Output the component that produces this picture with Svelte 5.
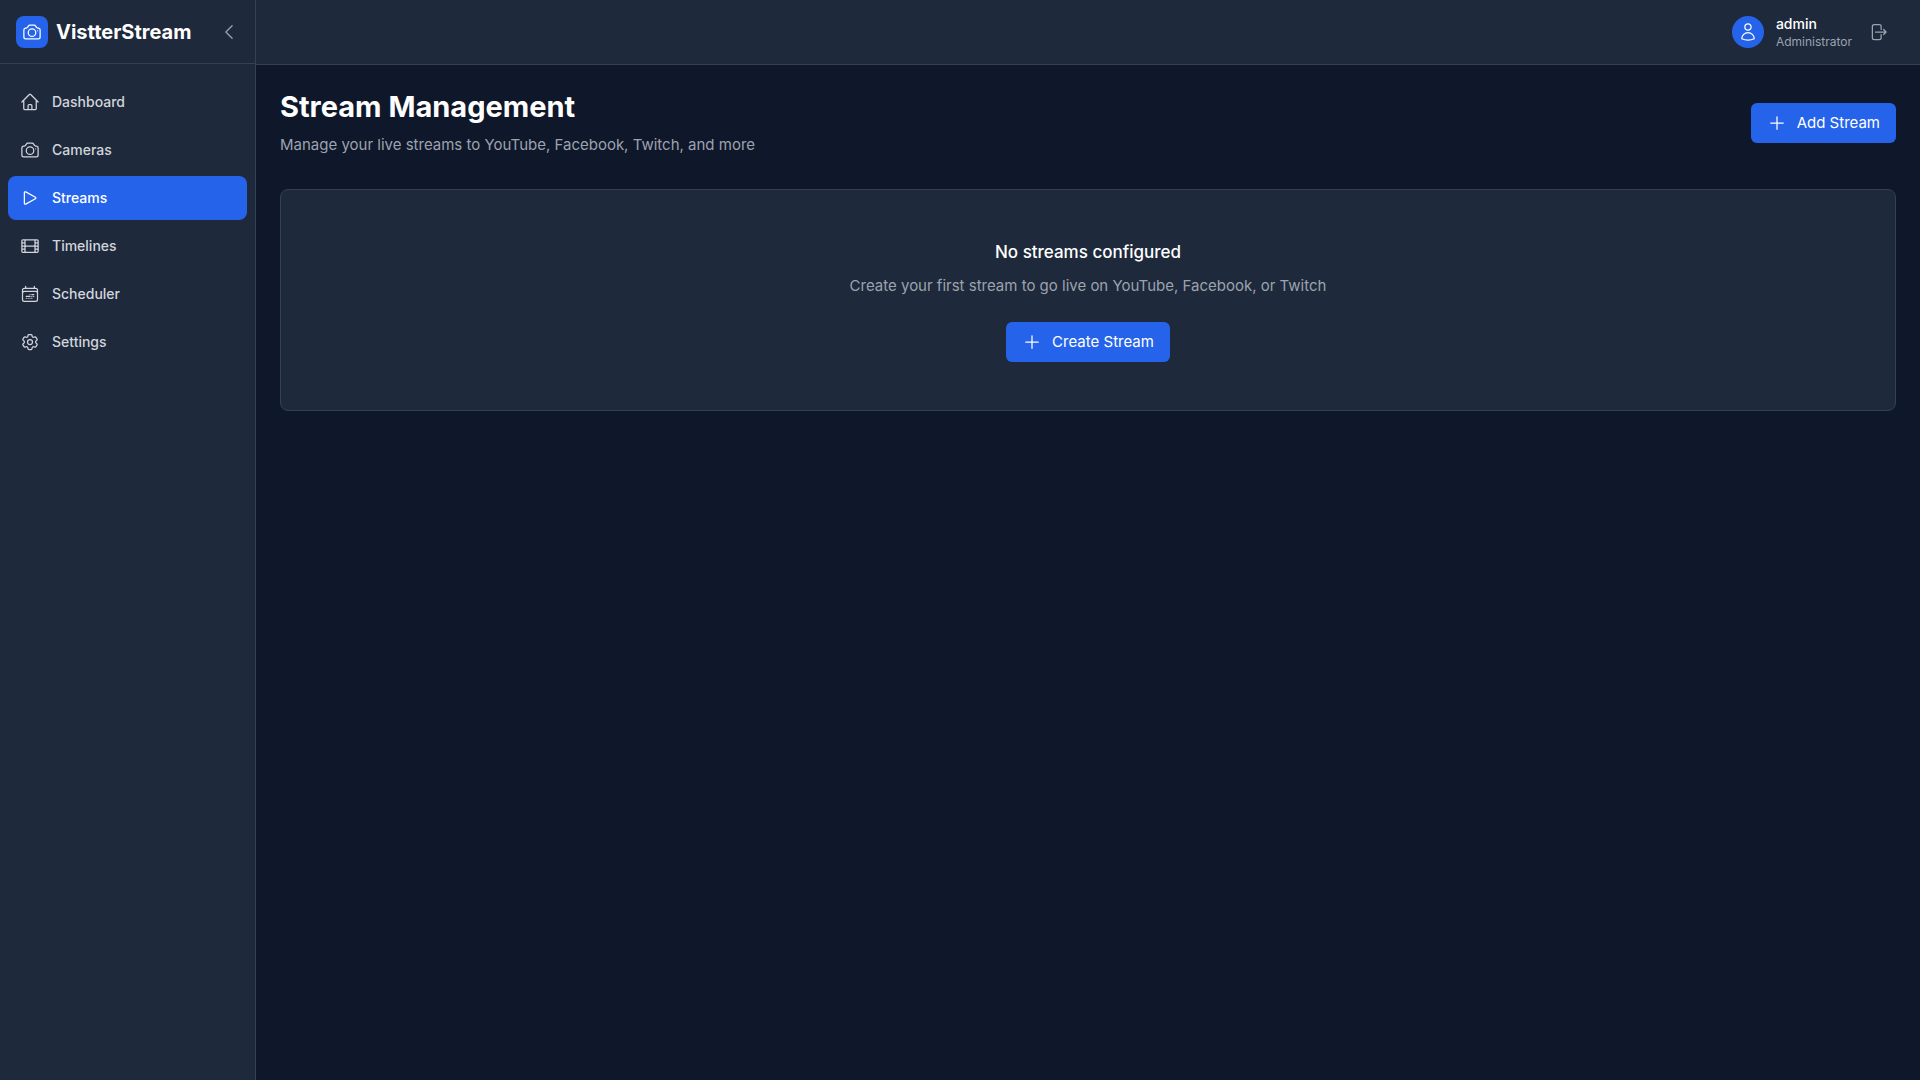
<script>
  const icons = {
    home: 'm2.25 12 8.954-8.955c.44-.439 1.152-.439 1.591 0L21.75 12M4.5 9.75v10.125c0 .621.504 1.125 1.125 1.125H9.75v-4.875c0-.621.504-1.125 1.125-1.125h2.25c.621 0 1.125.504 1.125 1.125V21h4.125c.621 0 1.125-.504 1.125-1.125V9.75M8.25 21h8.25',
    camera:
      'M6.827 6.175A2.31 2.31 0 0 1 5.186 7.23c-.38.054-.757.112-1.134.175C2.999 7.58 2.25 8.507 2.25 9.574V18a2.25 2.25 0 0 0 2.25 2.25h15A2.25 2.25 0 0 0 21.75 18V9.574c0-1.067-.75-1.994-1.802-2.169a47.865 47.865 0 0 0-1.134-.175 2.31 2.31 0 0 1-1.64-1.055l-.822-1.316a2.192 2.192 0 0 0-1.736-1.039 48.774 48.774 0 0 0-5.232 0 2.192 2.192 0 0 0-1.736 1.039l-.821 1.316Z M16.5 12.75a4.5 4.5 0 1 1-9 0 4.5 4.5 0 0 1 9 0ZM18.75 10.5h.008v.008h-.008V10.5Z',
    play: 'M5.25 5.653c0-.856.917-1.398 1.667-.986l11.54 6.347a1.125 1.125 0 0 1 0 1.972l-11.54 6.347a1.125 1.125 0 0 1-1.667-.986V5.653Z',
    film: 'M3.375 19.5h17.25m-17.25 0a1.125 1.125 0 0 1-1.125-1.125M3.375 19.5h1.5C5.496 19.5 6 18.996 6 18.375m-3.75 0V5.625m0 12.75v-1.5c0-.621.504-1.125 1.125-1.125m18.375 2.625V5.625m0 12.75c0 .621-.504 1.125-1.125 1.125m1.125-1.125v-1.5c0-.621-.504-1.125-1.125-1.125m0 3.75h-1.5A1.125 1.125 0 0 1 18 18.375M20.625 4.5H3.375m17.25 0c.621 0 1.125.504 1.125 1.125M20.625 4.5h-1.5C18.504 4.5 18 5.004 18 5.625m3.75 0v1.5c0 .621-.504 1.125-1.125 1.125M3.375 4.5c-.621 0-1.125.504-1.125 1.125M3.375 4.5h1.5C5.496 4.5 6 5.004 6 5.625m-3.75 0v1.5c0 .621.504 1.125 1.125 1.125m0 0h1.5m-1.5 0c-.621 0-1.125.504-1.125 1.125v1.5c0 .621.504 1.125 1.125 1.125m1.5-3.75C5.496 8.25 6 7.746 6 7.125v-1.5M4.875 8.25C5.496 8.25 6 8.754 6 9.375v1.5m0-5.25v5.25m0-5.25C6 5.004 6.504 4.5 7.125 4.5h9.75c.621 0 1.125.504 1.125 1.125m1.125 2.625h1.5m-1.5 0A1.125 1.125 0 0 1 18 7.125v-1.5m1.125 2.625c-.621 0-1.125.504-1.125 1.125v1.5m2.625-2.625c.621 0 1.125.504 1.125 1.125v1.5c0 .621-.504 1.125-1.125 1.125M18 5.625v5.25M7.125 12h9.75m-9.75 0A1.125 1.125 0 0 1 6 10.875M7.125 12C6.504 12 6 12.504 6 13.125m0-2.25C6 11.496 5.496 12 4.875 12M18 10.875c0 .621-.504 1.125-1.125 1.125M18 10.875c0 .621.504 1.125 1.125 1.125m-2.25 0c.621 0 1.125.504 1.125 1.125m-12 5.25v-5.25m0 5.25c0 .621.504 1.125 1.125 1.125h9.75c.621 0 1.125-.504 1.125-1.125m-12 0v-1.5c0-.621-.504-1.125-1.125-1.125M18 18.375v-5.25m0 5.25v-1.5c0-.621.504-1.125 1.125-1.125M18 13.125v1.5c0 .621.504 1.125 1.125 1.125M18 13.125c0-.621.504-1.125 1.125-1.125M6 13.125v1.5c0 .621-.504 1.125-1.125 1.125M6 13.125C6 12.504 5.496 12 4.875 12m-1.5 0h1.5m-1.5 0c-.621 0-1.125.504-1.125 1.125v1.5c0 .621.504 1.125 1.125 1.125M19.125 12h1.5m0 0c.621 0 1.125.504 1.125 1.125v1.5c0 .621-.504 1.125-1.125 1.125m-17.25 0h1.5m14.25 0h1.5',
    calendar:
      'M6.75 2.994v2.25m10.5-2.25v2.25m-14.252 13.5V7.491a2.25 2.25 0 0 1 2.25-2.25h13.5a2.25 2.25 0 0 1 2.25 2.25v11.251m-18 0a2.25 2.25 0 0 0 2.25 2.25h13.5a2.25 2.25 0 0 0 2.25-2.25m-18 0v-7.5a2.25 2.25 0 0 1 2.25-2.25h13.5a2.25 2.25 0 0 1 2.25 2.25v7.5m-6.75-6h2.25m-9 2.25h4.5m.002-2.25h.005v.006H12v-.006Zm-.001 4.5h.006v.006h-.006v-.005Zm-2.25.001h.005v.006H9.75v-.006Zm-2.25 0h.005v.005h-.006v-.005Zm6.75-2.247h.005v.005h-.005v-.005Zm0 2.247h.006v.006h-.006v-.006Zm2.25-2.248h.006V15H16.5v-.005Z',
    cog: 'M9.594 3.94c.09-.542.56-.94 1.11-.94h2.593c.55 0 1.02.398 1.11.94l.213 1.281c.063.374.313.686.645.87.074.04.147.083.22.127.325.196.72.257 1.075.124l1.217-.456a1.125 1.125 0 0 1 1.37.49l1.296 2.247a1.125 1.125 0 0 1-.26 1.431l-1.003.827c-.293.241-.438.613-.43.992a7.723 7.723 0 0 1 0 .255c-.008.378.137.75.43.991l1.004.827c.424.35.534.955.26 1.43l-1.298 2.247a1.125 1.125 0 0 1-1.369.491l-1.217-.456c-.355-.133-.75-.072-1.076.124a6.47 6.47 0 0 1-.22.128c-.331.183-.581.495-.644.869l-.213 1.281c-.09.543-.56.94-1.11.94h-2.594c-.55 0-1.019-.398-1.11-.94l-.213-1.281c-.062-.374-.312-.686-.644-.87a6.52 6.52 0 0 1-.22-.127c-.325-.196-.72-.257-1.076-.124l-1.217.456a1.125 1.125 0 0 1-1.369-.49l-1.297-2.247a1.125 1.125 0 0 1 .26-1.431l1.004-.827c.292-.24.437-.613.43-.991a6.932 6.932 0 0 1 0-.255c.007-.38-.138-.751-.43-.992l-1.004-.827a1.125 1.125 0 0 1-.26-1.43l1.297-2.247a1.125 1.125 0 0 1 1.37-.491l1.216.456c.356.133.751.072 1.076-.124.072-.044.146-.086.22-.128.332-.183.582-.495.644-.869l.214-1.28Z M15 12a3 3 0 1 1-6 0 3 3 0 0 1 6 0Z',
    chevron: 'M15.75 19.5 8.25 12l7.5-7.5',
    user: 'M15.75 6a3.75 3.75 0 1 1-7.5 0 3.75 3.75 0 0 1 7.5 0ZM4.501 20.118a7.5 7.5 0 0 1 14.998 0A17.933 17.933 0 0 1 12 21.75c-2.676 0-5.216-.584-7.499-1.632Z',
    logout:
      'M15.75 9V5.25A2.25 2.25 0 0 0 13.5 3h-6a2.25 2.25 0 0 0-2.25 2.25v13.5A2.25 2.25 0 0 0 7.5 21h6a2.25 2.25 0 0 0 2.25-2.25V15m3 0 3-3m0 0-3-3m3 3H9',
    plus: 'M12 4.5v15m7.5-7.5h-15',
  };

  const nav = [
    { label: 'Dashboard', icon: 'home' },
    { label: 'Cameras', icon: 'camera' },
    { label: 'Streams', icon: 'play' },
    { label: 'Timelines', icon: 'film' },
    { label: 'Scheduler', icon: 'calendar' },
    { label: 'Settings', icon: 'cog' },
  ];

  let current = $state('Streams');
</script>

{#snippet icon(name)}
  <svg class="icon" viewBox="0 0 24 24" aria-hidden="true"><path d={icons[name]} /></svg>
{/snippet}

<div class="app">
  <aside class="sidebar">
    <div class="brand">
      <span class="logo">{@render icon('camera')}</span>
      <span class="brand-name">VistterStream</span>
      <button class="icon-button collapse" aria-label="Collapse sidebar">{@render icon('chevron')}</button>
    </div>
    <nav aria-label="Main">
      {#each nav as item}
        <a
          href={'#' + item.label.toLowerCase()}
          class:active={current === item.label}
          aria-current={current === item.label ? 'page' : undefined}
          onclick={() => (current = item.label)}
        >
          {@render icon(item.icon)}
          <span>{item.label}</span>
        </a>
      {/each}
    </nav>
  </aside>

  <div class="content">
    <header class="topbar">
      <div class="account">
        <span class="avatar">{@render icon('user')}</span>
        <div class="user">
          <span class="user-name">admin</span>
          <span class="user-role">Administrator</span>
        </div>
      </div>
      <button class="icon-button logout" aria-label="Log out">{@render icon('logout')}</button>
    </header>

    <main>
      <div class="page-head">
        <div>
          <h1>Stream Management</h1>
          <p>Manage your live streams to YouTube, Facebook, Twitch, and more</p>
        </div>
        <button class="primary">{@render icon('plus')}<span>Add Stream</span></button>
      </div>

      <section class="empty">
        <h2>No streams configured</h2>
        <p>Create your first stream to go live on YouTube, Facebook, or Twitch</p>
        <button class="primary">{@render icon('plus')}<span>Create Stream</span></button>
      </section>
    </main>
  </div>
</div>

<style>
  :global(body) {
    margin: 0;
    background: #0f172a;
  }

  .app {
    display: flex;
    min-height: 100vh;
    background: #0f172a;
    color: #fff;
    font-family: Inter, 'Liberation Sans', sans-serif;
    font-size: 15px;
    line-height: 24px;
    -webkit-font-smoothing: antialiased;
  }

  .app * {
    box-sizing: border-box;
  }

  h1,
  h2,
  p {
    margin: 0;
  }

  button {
    border: 0;
    font: inherit;
    cursor: pointer;
  }

  .icon {
    display: block;
    flex: none;
    width: 20px;
    height: 20px;
    fill: none;
    stroke: currentColor;
    stroke-width: 1.5;
    stroke-linecap: round;
    stroke-linejoin: round;
  }

  .sidebar {
    flex: none;
    width: 256px;
    background: #1e293b;
    border-right: 1px solid #334155;
  }

  .brand {
    display: flex;
    align-items: center;
    gap: 8px;
    height: 64px;
    padding: 0 16px;
    border-bottom: 1px solid #334155;
  }

  .logo,
  .avatar {
    display: grid;
    place-items: center;
    flex: none;
    width: 32px;
    height: 32px;
    background: #2563eb;
  }

  .logo {
    border-radius: 8px;
  }

  .brand-name {
    font-size: 20px;
    font-weight: 700;
    line-height: 28px;
  }

  .icon-button {
    padding: 0;
    background: none;
    color: #9ca3af;
  }

  .collapse {
    margin-left: auto;
  }

  nav {
    display: flex;
    flex-direction: column;
    gap: 4px;
    padding: 16px 8px;
  }

  nav a {
    display: flex;
    align-items: center;
    gap: 12px;
    padding: 12px;
    border-radius: 8px;
    color: #d1d5db;
    font-size: 14px;
    font-weight: 500;
    line-height: 20px;
    text-decoration: none;
  }

  nav a.active {
    background: #2563eb;
    color: #fff;
  }

  .content {
    flex: 1;
    min-width: 0;
  }

  .topbar {
    display: flex;
    align-items: center;
    justify-content: flex-end;
    gap: 8px;
    height: 65px;
    padding: 0 24px;
    background: #1e293b;
    border-bottom: 1px solid #334155;
  }

  .account {
    display: flex;
    align-items: center;
    gap: 12px;
  }

  .avatar {
    border-radius: 50%;
  }

  .user {
    display: flex;
    flex-direction: column;
  }

  .user-name {
    font-size: 14px;
    font-weight: 500;
    line-height: 20px;
  }

  .user-role {
    color: #9ca3af;
    font-size: 12px;
    line-height: 16px;
  }

  .logout {
    padding: 8px;
  }

  main {
    padding: 24px;
  }

  .page-head {
    display: flex;
    align-items: center;
    justify-content: space-between;
    gap: 24px;
    margin-bottom: 32px;
  }

  h1 {
    margin-bottom: 8px;
    font-size: 29px;
    font-weight: 700;
    line-height: 36px;
  }

  p {
    color: #9ca3af;
  }

  .primary {
    display: inline-flex;
    align-items: center;
    gap: 10px;
    flex: none;
    padding: 8px 16px;
    border-radius: 6px;
    background: #2563eb;
    color: #fff;
  }

  .empty {
    display: flex;
    flex-direction: column;
    align-items: center;
    padding: 48px;
    border: 1px solid #334155;
    border-radius: 8px;
    background: #1e293b;
    text-align: center;
  }

  h2 {
    margin-bottom: 8px;
    font-size: 17px;
    font-weight: 500;
    line-height: 28px;
  }

  .empty p {
    margin-bottom: 24px;
  }
</style>
